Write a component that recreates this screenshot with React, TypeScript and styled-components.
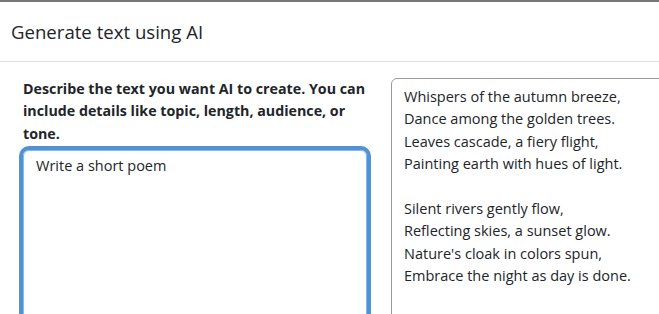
import React from "react";
import styled, { createGlobalStyle } from "styled-components";

const GlobalStyle = createGlobalStyle`
  html, body {
    margin: 0;
    padding: 0;
    background: #ffffff;
    overflow: hidden;
  }
  body {
    font-family: "Open Sans", "Noto Sans", sans-serif;
    color: #212529;
  }
`;

const Page = styled.div`
  width: 659px;
  height: 314px;
  overflow: hidden;
  display: flex;
  flex-direction: column;
`;

const BehindStrip = styled.div`
  height: 1px;
  overflow: hidden;
  span {
    display: block;
    margin-top: -13px;
    margin-left: -8px;
    font-size: 14px;
    line-height: 14px;
    font-weight: 600;
    color: #333;
  }
`;

const Modal = styled.div`
  width: 760px;
  border-top: 2px solid #767676;
  background: #fff;
  display: flex;
  flex-direction: column;
`;

const Header = styled.div`
  height: 59px;
  display: flex;
  align-items: center;
  padding: 0 11px;
  border-bottom: 1px solid #dee2e6;
  h2 {
    margin: 0;
    font-size: 18.6px;
    font-weight: 500;
    color: #212529;
  }
`;

const Body = styled.div`
  display: grid;
  grid-template-columns: 344px 344px;
  column-gap: 24px;
  padding: 16px 23px;
`;

const Column = styled.div`
  display: flex;
  flex-direction: column;
`;

const Label = styled.label`
  font-size: 14.25px;
  font-weight: 700;
  line-height: 22.4px;
  margin-bottom: 5px;
`;

const Prompt = styled.textarea`
  box-sizing: border-box;
  width: 344px;
  height: 200px;
  border: 1px solid #86b7fe;
  border-radius: 6px;
  outline: 4px solid #4f93d2;
  padding: 4px 12px;
  font-family: inherit;
  font-size: 14.5px;
  line-height: 22.4px;
  color: #212529;
  resize: none;
`;

const Output = styled.div`
  box-sizing: border-box;
  height: 260px;
  border: 1px solid #9a9a9a;
  border-radius: 6px;
  padding: 7px 12px;
  font-size: 14.5px;
  line-height: 22.4px;
  white-space: pre-wrap;
  color: #212529;
`;

const poem = `Whispers of the autumn breeze,
Dance among the golden trees.
Leaves cascade, a fiery flight,
Painting earth with hues of light.

Silent rivers gently flow,
Reflecting skies, a sunset glow.
Nature's cloak in colors spun,
Embrace the night as day is done.`;

export default function App() {
  return (
    <Page>
      <GlobalStyle />
      <BehindStrip>
        <span>Discussion</span>
      </BehindStrip>
      <Modal>
        <Header>
          <h2>Generate text using AI</h2>
        </Header>
        <Body>
          <Column>
            <Label htmlFor="prompt">
              Describe the text you want AI to create. You can include details
              like topic, length, audience, or tone.
            </Label>
            <Prompt id="prompt" defaultValue="Write a short poem" />
          </Column>
          <Output>{poem}</Output>
        </Body>
      </Modal>
    </Page>
  );
}
